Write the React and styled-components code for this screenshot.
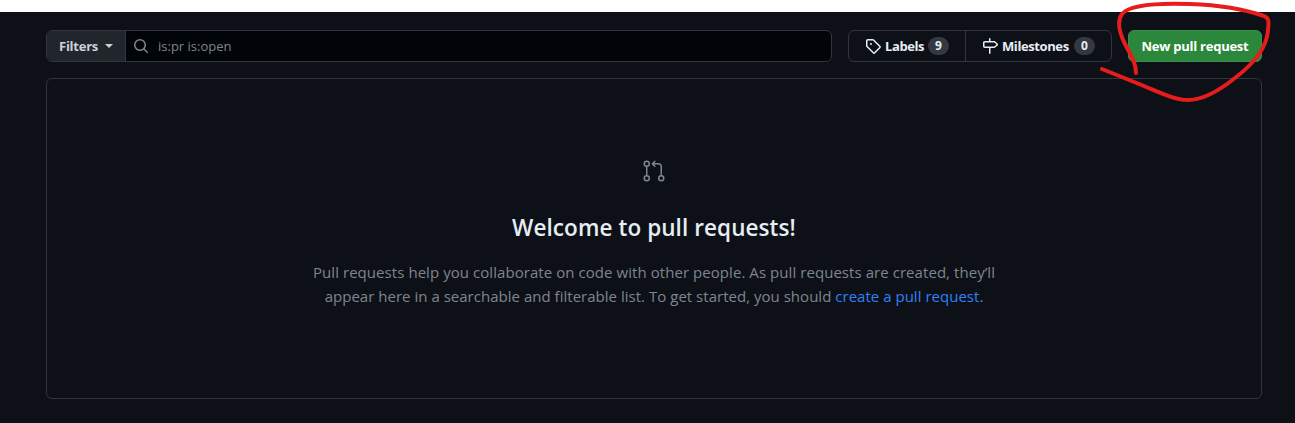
import React from 'react';
import styled, { createGlobalStyle } from 'styled-components';
import { GoGitPullRequest } from 'react-icons/go';

const GlobalStyle = createGlobalStyle`
  * { box-sizing: border-box; }
  body {
    margin: 0;
    background: #fff;
    color: #e6edf3;
    font: 13px/20px "Open Sans", "Noto Sans", sans-serif;
    overflow: hidden;
  }
  button, input { font: inherit; color: inherit; }
`;

const Page = styled.main`
  position: relative;
  height: 423px;
  padding-top: 12px;
`;

const Surface = styled.div`
  height: 411px;
  padding: 18px 33px 0 46px;
  background: #0d1117;
`;

const Toolbar = styled.div`
  display: flex;
  gap: 16px;
  height: 32px;
  margin-bottom: 16px;
`;

const SearchGroup = styled.div`
  display: flex;
  flex: 1;
  border: 1px solid #30363d;
  border-radius: 6px;
  overflow: hidden;
  background: #010409;
`;

const FilterButton = styled.button`
  display: flex;
  align-items: center;
  width: 79px;
  padding: 0 0 0 12px;
  border: 0;
  border-right: 1px solid #30363d;
  background: #21262d;
  color: #c9d1d9;
  font-weight: 700;
  letter-spacing: -0.25px;
`;

const FilterText = styled.span`
  width: 38px;
  text-align: left;
`;

const Caret = styled.span`
  margin-left: 8px;
  border: 4px solid transparent;
  border-top-color: currentColor;
  border-bottom-width: 0;
`;

const SearchField = styled.label`
  display: flex;
  flex: 1;
  align-items: center;
  gap: 9px;
  padding-left: 7px;
  color: #7d8590;
`;

const SearchInput = styled.input`
  flex: 1;
  min-width: 0;
  padding: 0;
  border: 0;
  outline: 0;
  background: transparent;
`;

const LinkGroup = styled.nav`
  display: flex;
  width: 264px;
  border: 1px solid #30363d;
  border-radius: 6px;
`;

const NavItem = styled.a`
  display: flex;
  align-items: center;
  width: ${(p) => p.$width};
  padding-left: 16px;
  font-weight: 700;
  white-space: nowrap;

  & + & { border-left: 1px solid #30363d; }
`;

const NavText = styled.span`
  width: ${(p) => p.$width};
  margin: 0 3px 0 4px;
  letter-spacing: ${(p) => p.$tracking};
`;

const Counter = styled.span`
  width: 21px;
  height: 18px;
  border-radius: 9px;
  background: #343941;
  font-size: 12px;
  line-height: 18px;
  text-align: center;
`;

const PrimaryButton = styled.button`
  width: 134px;
  padding: 0;
  border: 1px solid #3b9049;
  border-radius: 6px;
  background: #2b873b;
  color: #fff;
  font-weight: 700;
  white-space: nowrap;
  letter-spacing: ${(p) => p.$tracking};
`;

const Blankslate = styled.section`
  display: flex;
  flex-direction: column;
  align-items: center;
  height: 321px;
  padding-top: 80px;
  border: 1px solid #30363d;
  border-radius: 6px;
  text-align: center;

  > svg { color: #7d8590; }
`;

const Title = styled.h3`
  margin: 27px 0 0;
  font-size: 22.5px;
  font-weight: 600;
  line-height: 36px;
  letter-spacing: ${(p) => p.$tracking};
`;

const Description = styled.p`
  margin: 14px 0 0;
  color: #7d8590;
  font-size: 15px;
  line-height: 24px;
`;

const Line = styled.span`
  display: block;
  white-space: nowrap;
  letter-spacing: ${(p) => p.$tracking};
`;

const TextLink = styled.a`
  color: #2f81f7;
`;

const Scribble = styled.svg`
  position: absolute;
  top: 0;
  left: 1095px;
  pointer-events: none;
`;

const icons = {
  search:
    'M10.68 11.74a6 6 0 0 1-7.922-8.982 6 6 0 0 1 8.982 7.922l3.04 3.04a.749.749 0 0 1-.326 1.275.749.749 0 0 1-.734-.215ZM11.5 7a4.499 4.499 0 1 0-8.997 0A4.499 4.499 0 0 0 11.5 7Z',
  tag: 'M1 7.775V2.75C1 1.784 1.784 1 2.75 1h5.025c.464 0 .91.184 1.238.513l6.25 6.25a1.75 1.75 0 0 1 0 2.474l-5.026 5.026a1.75 1.75 0 0 1-2.474 0l-6.25-6.25A1.752 1.752 0 0 1 1 7.775Zm1.5 0c0 .066.026.13.073.177l6.25 6.25a.25.25 0 0 0 .354 0l5.025-5.025a.25.25 0 0 0 0-.354l-6.25-6.25a.25.25 0 0 0-.177-.073H2.75a.25.25 0 0 0-.25.25ZM6 5a1 1 0 1 1 0 2 1 1 0 0 1 0-2Z',
  milestone:
    'M7.75 0a.75.75 0 0 1 .75.75V3h3.634c.414 0 .814.147 1.13.414l2.07 1.75a1.75 1.75 0 0 1 0 2.672l-2.07 1.75a1.75 1.75 0 0 1-1.13.414H8.5v5.25a.75.75 0 0 1-1.5 0V10H2.75A1.75 1.75 0 0 1 1 8.25v-3.5C1 3.784 1.784 3 2.75 3H7V.75A.75.75 0 0 1 7.75 0Zm4.384 8.5a.25.25 0 0 0 .161-.06l2.07-1.75a.248.248 0 0 0 0-.38l-2.07-1.75a.25.25 0 0 0-.161-.06H2.75a.25.25 0 0 0-.25.25v3.5c0 .138.112.25.25.25h9.384Z',
};

function Icon({ name }) {
  return (
    <svg width="16" height="16" viewBox="0 0 16 16" fill="currentColor" aria-hidden="true">
      <path d={icons[name]} />
    </svg>
  );
}

export default function App() {
  return (
    <Page>
      <GlobalStyle />
      <Surface>
        <Toolbar>
          <SearchGroup>
            <FilterButton>
              <FilterText>Filters</FilterText>
              <Caret />
            </FilterButton>
            <SearchField>
              <Icon name="search" />
              <SearchInput defaultValue="is:pr is:open" />
            </SearchField>
          </SearchGroup>
          <LinkGroup>
            <NavItem $width="116px">
              <Icon name="tag" />
              <NavText $width="40px" $tracking="-0.4px">Labels</NavText>
              <Counter>9</Counter>
            </NavItem>
            <NavItem $width="146px">
              <Icon name="milestone" />
              <NavText $width="69px" $tracking="-0.4px">Milestones</NavText>
              <Counter>0</Counter>
            </NavItem>
          </LinkGroup>
          <PrimaryButton $tracking="-0.25px">New pull request</PrimaryButton>
        </Toolbar>
        <Blankslate>
          <GoGitPullRequest size={24} />
          <Title $tracking="0.08px">Welcome to pull requests!</Title>
          <Description>
            <Line $tracking="0.06px">
              Pull requests help you collaborate on code with other people. As pull requests are created, they’ll
            </Line>
            <Line $tracking="0.02px">
              appear here in a searchable and filterable list. To get started, you should{' '}
              <TextLink>create a pull request</TextLink>.
            </Line>
          </Description>
        </Blankslate>
      </Surface>
      <Scribble width="200" height="110" viewBox="1095 0 200 110" fill="none" aria-hidden="true">
        <path
          d="M1136 73C1136 62 1130 54 1125 44C1119 32 1117 21 1122 14C1130 4 1161 3 1190 4C1218 5 1244 9 1264 16C1269 18 1269 21 1268 30C1267 48 1252 65 1235 78C1220 90 1203 100 1188 100C1175 100 1161 93 1144 86L1102 69"
          stroke="#e81c1c"
          strokeWidth="4"
          strokeLinecap="round"
          strokeLinejoin="round"
        />
      </Scribble>
    </Page>
  );
}
